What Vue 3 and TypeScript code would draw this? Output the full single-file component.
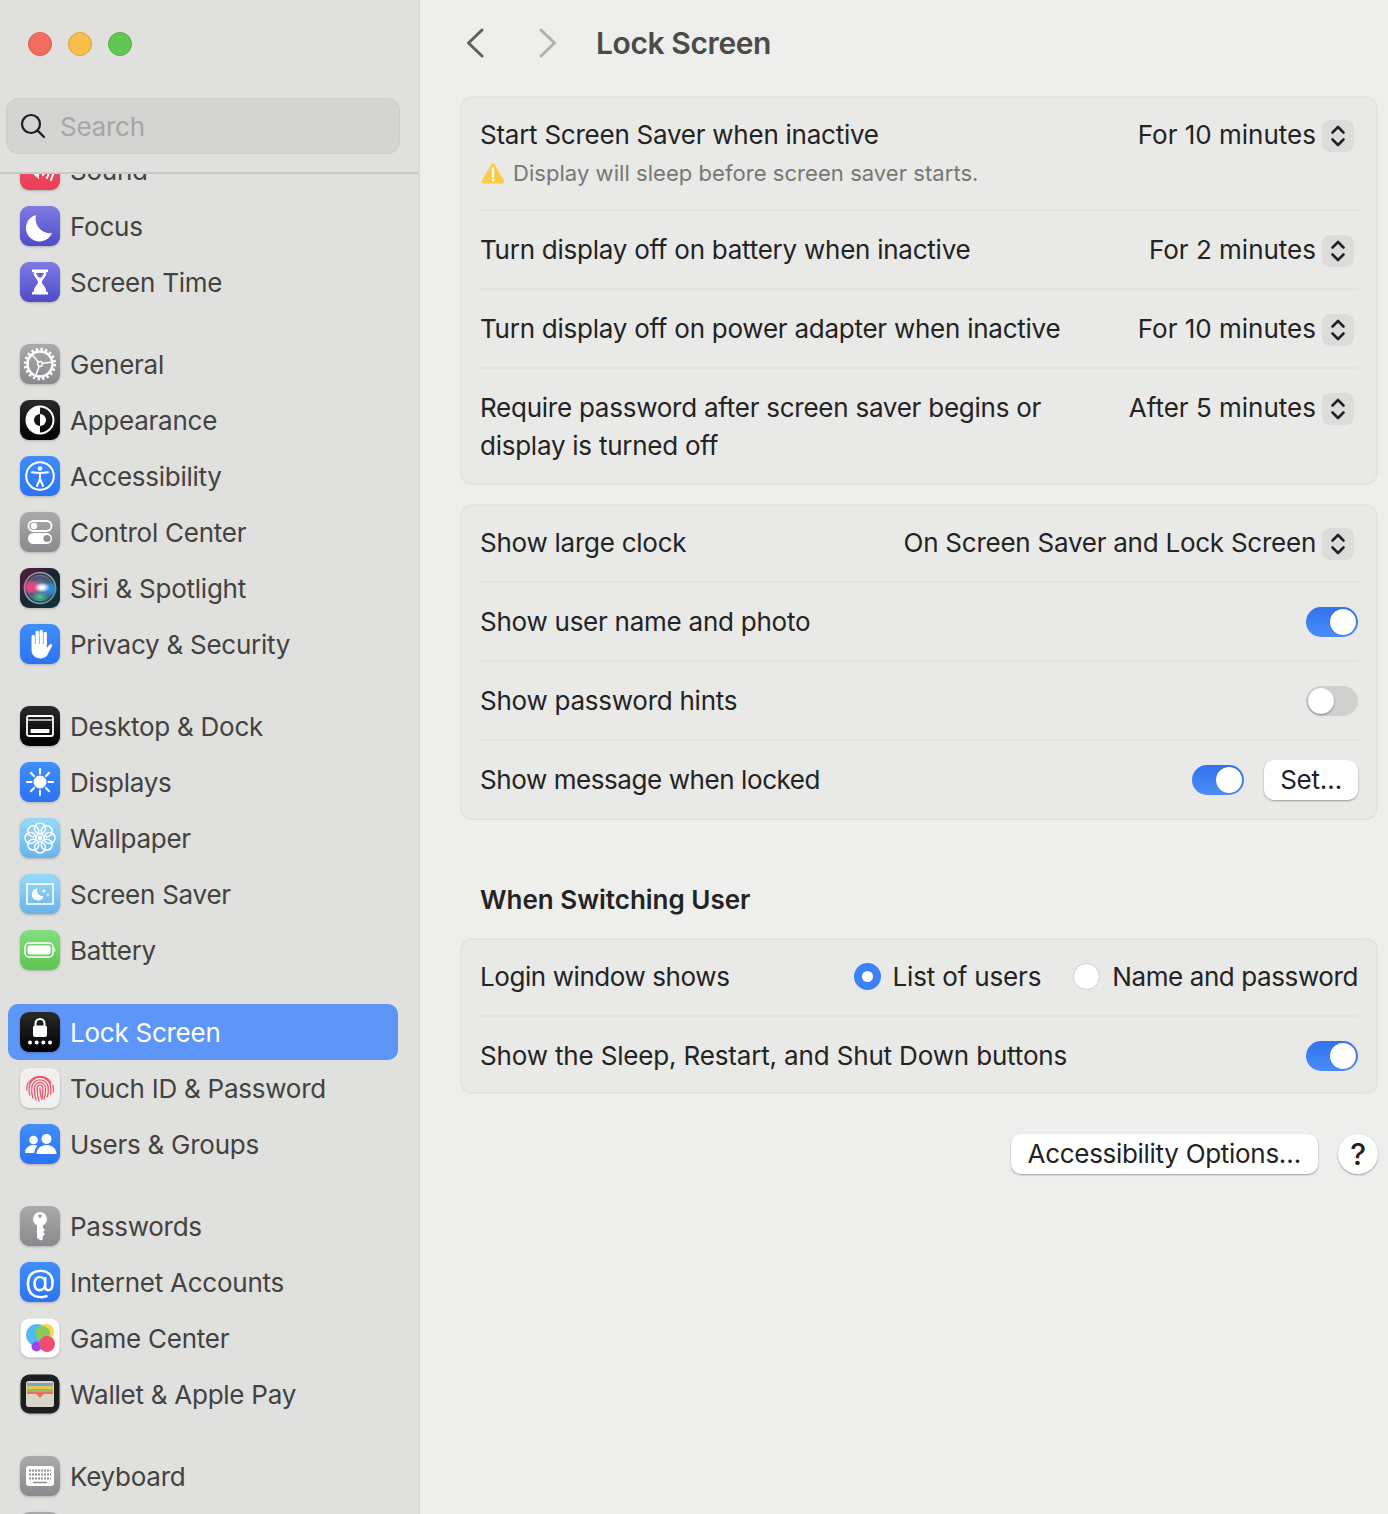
<script setup lang="ts">
interface Item { name: string; icon: string }
const groups: Item[][] = [
  [
    { name: 'Sound', icon: 'sound' },
    { name: 'Focus', icon: 'focus' },
    { name: 'Screen Time', icon: 'screentime' },
  ],
  [
    { name: 'General', icon: 'general' },
    { name: 'Appearance', icon: 'appearance' },
    { name: 'Accessibility', icon: 'accessibility' },
    { name: 'Control Center', icon: 'control' },
    { name: 'Siri & Spotlight', icon: 'siri' },
    { name: 'Privacy & Security', icon: 'privacy' },
  ],
  [
    { name: 'Desktop & Dock', icon: 'desktop' },
    { name: 'Displays', icon: 'displays' },
    { name: 'Wallpaper', icon: 'wallpaper' },
    { name: 'Screen Saver', icon: 'saver' },
    { name: 'Battery', icon: 'battery' },
  ],
  [
    { name: 'Lock Screen', icon: 'lock' },
    { name: 'Touch ID & Password', icon: 'touch' },
    { name: 'Users & Groups', icon: 'users' },
  ],
  [
    { name: 'Passwords', icon: 'passwords' },
    { name: 'Internet Accounts', icon: 'internet' },
    { name: 'Game Center', icon: 'game' },
    { name: 'Wallet & Apple Pay', icon: 'wallet' },
  ],
  [
    { name: 'Keyboard', icon: 'keyboard' },
    { name: 'Trackpad', icon: 'trackpad' },
  ],
]
const petals = [0, 45, 90, 135, 180, 225, 270, 315]
const rays = [0, 45, 90, 135, 180, 225, 270, 315]
const spokes = [-40, 80, 200]
</script>

<template>
  <div class="window">
    <svg class="defs" width="0" height="0" aria-hidden="true">
      <defs>
        <linearGradient id="gPurple" x1="0" y1="0" x2="0" y2="1"><stop offset="0" stop-color="#7f7ce4" /><stop offset="1" stop-color="#4e4cc5" /></linearGradient>
        <linearGradient id="gGray" x1="0" y1="0" x2="0" y2="1"><stop offset="0" stop-color="#aaaaad" /><stop offset="1" stop-color="#8a8a8e" /></linearGradient>
        <linearGradient id="gBlue" x1="0" y1="0" x2="0" y2="1"><stop offset="0" stop-color="#3f8ff9" /><stop offset="1" stop-color="#2c72f3" /></linearGradient>
        <linearGradient id="gSky" x1="0" y1="0" x2="0" y2="1"><stop offset="0" stop-color="#97dafa" /><stop offset="1" stop-color="#67b3ea" /></linearGradient>
        <linearGradient id="gGreen" x1="0" y1="0" x2="0" y2="1"><stop offset="0" stop-color="#84dc80" /><stop offset="1" stop-color="#5bc650" /></linearGradient>
        <linearGradient id="gRed" x1="0" y1="0" x2="0" y2="1"><stop offset="0" stop-color="#f5586c" /><stop offset="1" stop-color="#ec3c58" /></linearGradient>
        <linearGradient id="gBlack" x1="0" y1="0" x2="0" y2="1"><stop offset="0" stop-color="#2a2a2a" /><stop offset="1" stop-color="#000" /></linearGradient>
        <linearGradient id="gSiriBg" x1="0" y1="0" x2="1" y2="1"><stop offset="0" stop-color="#5a1d3e" /><stop offset=".5" stop-color="#17272f" /><stop offset="1" stop-color="#12343a" /></linearGradient>
        <linearGradient id="gSiriRing" x1="0" y1="0" x2="1" y2="1"><stop offset="0" stop-color="#c9708f" /><stop offset=".5" stop-color="#7fb0c0" /><stop offset="1" stop-color="#3f9d8c" /></linearGradient>
        <radialGradient id="gSiriOrb" cx="0.5" cy="0.5" r="0.55"><stop offset="0" stop-color="#7d8fb5" /><stop offset="1" stop-color="#27333f" /></radialGradient>
        <radialGradient id="gSiriPink" cx="0.5" cy="0.5" r="0.5"><stop offset="0" stop-color="#f5407f" /><stop offset=".6" stop-color="#f0467f" stop-opacity=".8" /><stop offset="1" stop-color="#f0467f" stop-opacity="0" /></radialGradient>
        <radialGradient id="gSiriCyan" cx="0.5" cy="0.5" r="0.5"><stop offset="0" stop-color="#2f8fe0" /><stop offset=".6" stop-color="#2f8fe0" stop-opacity=".8" /><stop offset="1" stop-color="#2f8fe0" stop-opacity="0" /></radialGradient>
        <radialGradient id="gSiriGreen" cx="0.5" cy="0.5" r="0.5"><stop offset="0" stop-color="#3fd09a" /><stop offset="1" stop-color="#3fd09a" stop-opacity="0" /></radialGradient>
        <radialGradient id="gSiriWhite" cx="0.5" cy="0.5" r="0.5"><stop offset=".25" stop-color="#fff" /><stop offset="1" stop-color="#fff" stop-opacity="0" /></radialGradient>
      </defs>
    </svg>

    <aside class="sidebar">
      <div class="side-head">
        <div class="lights">
          <span class="light red"></span>
          <span class="light yellow"></span>
          <span class="light green"></span>
        </div>
        <div class="search">
          <svg width="26" height="26" viewBox="0 0 26 26" fill="none" stroke="#1e1e1e" stroke-width="2.2" stroke-linecap="round">
            <circle cx="11" cy="11" r="9" />
            <path d="M17.6 17.6 24 24" />
          </svg>
          <span>Search</span>
        </div>
      </div>
      <div class="side-scroll">
        <div class="side-list">
          <div v-for="(group, gi) in groups" :key="gi" class="group">
            <div v-for="item in group" :key="item.name" class="item" :class="{ active: item.icon === 'lock' }">
              <svg class="app-icon" width="40" height="40" viewBox="0 0 40 40">
                <template v-if="item.icon === 'sound'">
                  <rect width="40" height="40" rx="9" fill="url(#gRed)" />
                  <path d="M7 17h5l7-6v18l-7-6H7z" fill="#fff" />
                  <path d="M23 15q3 5 0 10M27 12q4 8 0 16M31 10q5 10 0 20" stroke="#fff" stroke-width="2" fill="none" stroke-linecap="round" />
                </template>
                <template v-else-if="item.icon === 'focus'">
                  <rect width="40" height="40" rx="9" fill="url(#gPurple)" />
                  <path d="M16 9A13.500 13.500 0 1 0 32 27 14.500 14.500 0 0 1 16 9z" fill="#fff" />
                </template>
                <template v-else-if="item.icon === 'screentime'">
                  <rect width="40" height="40" rx="9" fill="url(#gPurple)" />
                  <path d="M12 7.500h16V10h-1.600c0 5-4 7-4.600 10 .6 3 4.600 5 4.600 10H28v2.500H12V30h1.600c0-5 4-7 4.600-10-.6-3-4.600-5-4.600-10H12z" fill="#fff" />
                  <path d="M16 11h8q-.5 3-4 5-3.500-2-4-5z" fill="#6664d4" />
                </template>
                <template v-else-if="item.icon === 'general'">
                  <rect width="40" height="40" rx="9" fill="url(#gGray)" />
                  <circle cx="20" cy="20" r="12.500" fill="none" stroke="#fff" stroke-width="2.600" />
                  <circle cx="20" cy="20" r="14.800" fill="none" stroke="#fff" stroke-width="2.800" stroke-dasharray="2.300 2.350" />
                  <circle cx="20" cy="20" r="2.400" fill="none" stroke="#fff" stroke-width="1.500" />
                  <path v-for="s in spokes" :key="s" d="M20 17.600V8" stroke="#fff" stroke-width="1.500" :transform="`rotate(${s} 20 20)`" />
                </template>
                <template v-else-if="item.icon === 'appearance'">
                  <rect width="40" height="40" rx="9" fill="url(#gBlack)" />
                  <circle cx="20" cy="20" r="13.500" fill="none" stroke="#fff" stroke-width="2" />
                  <path d="M20 7a13 13 0 0 0 0 26v-7a6 6 0 0 1 0-12z" fill="#fff" />
                  <path d="M20 14a6 6 0 0 1 0 12z" fill="#fff" />
                </template>
                <template v-else-if="item.icon === 'accessibility'">
                  <rect width="40" height="40" rx="9" fill="url(#gBlue)" />
                  <circle cx="20" cy="20" r="13.800" fill="none" stroke="#fff" stroke-width="2" />
                  <circle cx="20" cy="12.500" r="2.200" fill="#fff" />
                  <path d="M12 16.200q8 1.600 16 0M20 17.500v5.500M20 23l-3 7M20 23l3 7" stroke="#fff" stroke-width="2" fill="none" stroke-linecap="round" />
                </template>
                <template v-else-if="item.icon === 'control'">
                  <rect width="40" height="40" rx="9" fill="url(#gGray)" />
                  <rect x="8.500" y="9" width="23" height="10" rx="5" fill="none" stroke="#fff" stroke-width="1.800" />
                  <circle cx="14" cy="14" r="3.200" fill="#fff" />
                  <rect x="8" y="21" width="24" height="11" rx="5.500" fill="#fff" />
                  <circle cx="27" cy="26.500" r="3.600" fill="#8f8f92" />
                </template>
                <template v-else-if="item.icon === 'siri'">
                  <rect width="40" height="40" rx="9" fill="url(#gSiriBg)" />
                  <circle cx="20" cy="20" r="15.500" fill="url(#gSiriOrb)" stroke="url(#gSiriRing)" stroke-width="1.600" />
                  <circle cx="20" cy="20" r="12.500" fill="none" stroke="url(#gSiriRing)" stroke-width="1" opacity=".6" />
                  <ellipse cx="11.500" cy="19" rx="9" ry="7.500" fill="url(#gSiriPink)" />
                  <ellipse cx="29" cy="21" rx="9" ry="7.500" fill="url(#gSiriCyan)" />
                  <ellipse cx="20" cy="29" rx="9" ry="5" fill="url(#gSiriGreen)" />
                  <ellipse cx="22" cy="19.500" rx="8" ry="5" fill="url(#gSiriWhite)" />
                </template>
                <template v-else-if="item.icon === 'privacy'">
                  <rect width="40" height="40" rx="9" fill="url(#gBlue)" />
                  <path d="M11.500 12.500a1.700 1.700 0 0 1 3.400 0V20h.6V8.500a1.700 1.700 0 0 1 3.400 0V20h.6V7.500a1.700 1.700 0 0 1 3.400 0V20h.6V9.500a1.700 1.700 0 0 1 3.400 0V24l2.400-3.300c1.300-1.700 3.600-.2 2.700 1.600l-3.800 7C27.200 32.500 24.500 34.500 20.500 34.500c-5.500 0-9-3.500-9-9z" fill="#fff" />
                </template>
                <template v-else-if="item.icon === 'desktop'">
                  <rect width="40" height="40" rx="9" fill="url(#gBlack)" />
                  <rect x="7" y="10" width="26" height="20" rx="2" fill="none" stroke="#fff" stroke-width="1.800" />
                  <path d="M7 14h26" stroke="#fff" stroke-width="1.300" />
                  <rect x="10.500" y="23" width="19" height="4" rx="1" fill="#fff" />
                </template>
                <template v-else-if="item.icon === 'displays'">
                  <rect width="40" height="40" rx="9" fill="url(#gBlue)" />
                  <circle cx="20" cy="20" r="6.500" fill="#fff" />
                  <path v-for="r in rays" :key="r" d="M20 7v4.500" stroke="#fff" stroke-width="2" stroke-linecap="round" :transform="`rotate(${r} 20 20)`" />
                </template>
                <template v-else-if="item.icon === 'wallpaper'">
                  <rect width="40" height="40" rx="9" fill="url(#gSky)" />
                  <circle v-for="p in petals" :key="p" cx="20" cy="10.500" r="5.500" fill="none" stroke="#fff" stroke-width="1.500" :transform="`rotate(${p} 20 20)`" />
                  <circle cx="20" cy="20" r="2.500" fill="#fff" />
                </template>
                <template v-else-if="item.icon === 'saver'">
                  <rect width="40" height="40" rx="9" fill="url(#gSky)" />
                  <rect x="7" y="10" width="26" height="20" fill="none" stroke="#fff" stroke-width="1.600" />
                  <path d="M17 14.500a6 6 0 1 0 6.500 8 6.500 6.500 0 0 1-6.500-8z" fill="#fff" />
                  <path d="M24 14.500l.7 1.800 1.800.7-1.800.7-.7 1.800-.7-1.800-1.800-.7 1.800-.7zM28 19l.5 1.200 1.200.5-1.200.5-.5 1.200-.5-1.200-1.200-.5 1.200-.5z" fill="#fff" />
                </template>
                <template v-else-if="item.icon === 'battery'">
                  <rect width="40" height="40" rx="9" fill="url(#gGreen)" />
                  <rect x="5" y="13" width="28" height="14" rx="4" fill="none" stroke="#fff" stroke-width="1.500" />
                  <rect x="7.500" y="15.500" width="23" height="9" rx="2" fill="#fff" />
                  <path d="M34.500 17.500q2 2.500 0 5z" fill="#fff" />
                </template>
                <template v-else-if="item.icon === 'lock'">
                  <rect width="40" height="40" rx="9" fill="url(#gBlack)" />
                  <path d="M15.500 14v-2.500a4.500 4.500 0 0 1 9 0V14" fill="none" stroke="#fff" stroke-width="2" />
                  <rect x="13" y="13.500" width="14" height="11.500" rx="2" fill="#fff" />
                  <circle cx="10" cy="30.500" r="2" fill="#fff" />
                  <circle cx="16.700" cy="30.500" r="2" fill="#fff" />
                  <circle cx="23.300" cy="30.500" r="2" fill="#fff" />
                  <circle cx="30" cy="30.500" r="2" fill="#fff" />
                </template>
                <template v-else-if="item.icon === 'touch'">
                  <rect width="40" height="40" rx="9" fill="#f1f0ef" />
                  <g fill="none" stroke="#e9536d" stroke-width="1.300" stroke-linecap="round">
                    <path d="M9 15A12.500 12.500 0 0 1 31 15" />
                    <path d="M6.800 22A13.500 13.500 0 0 1 8 15M33.200 24a15 15 0 0 0-.4-7" />
                    <path d="M9.800 27q-1-3-.6-7a10.800 10.800 0 0 1 21.600 0q.3 3-.2 6" />
                    <path d="M12.800 30q-1.500-5-1-10a8.200 8.200 0 0 1 16.400 0q.5 5-1 9" />
                    <path d="M16 32q-1.800-6-1.500-12a5.500 5.500 0 0 1 11 0q.3 6-1.500 11" />
                    <path d="M19 33q-1.900-6-1.800-13a2.800 2.800 0 0 1 5.600 0q.2 6-1 11" />
                    <path d="M20 20q0 7 1.800 11" />
                  </g>
                </template>
                <template v-else-if="item.icon === 'users'">
                  <rect width="40" height="40" rx="9" fill="url(#gBlue)" />
                  <circle cx="13.500" cy="16" r="4.300" fill="#fff" />
                  <circle cx="26.500" cy="15" r="5" fill="#fff" />
                  <path d="M5 29c0-5 4-8 8.500-8 1.500 0 3 .4 4 1-2 1.700-3 4-3.200 7z" fill="#fff" />
                  <path d="M16.500 30c0-5.500 4.500-9 10-9s10 3.500 10 9z" fill="#fff" />
                </template>
                <template v-else-if="item.icon === 'passwords'">
                  <rect width="40" height="40" rx="9" fill="url(#gGray)" />
                  <circle cx="20" cy="13" r="7" fill="#fff" />
                  <path d="M17 18h6v4l2 2-2 2 2 2-2 2v3l-2 1.500L17 32z" fill="#fff" />
                  <circle cx="20" cy="10" r="1.800" fill="#9b9b9e" />
                </template>
                <template v-else-if="item.icon === 'internet'">
                  <rect width="40" height="40" rx="9" fill="url(#gBlue)" />
                  <text x="20" y="29.500" text-anchor="middle" class="at">@</text>
                </template>
                <template v-else-if="item.icon === 'game'">
                  <rect x=".5" y=".5" width="39" height="39" rx="9" fill="#fff" />
                  <circle cx="17" cy="17" r="11" fill="#54b8f5" />
                  <circle cx="26" cy="14" r="8" fill="#f4d94c" />
                  <circle cx="22.500" cy="15.500" r="7.500" fill="#8bc958" />
                  <circle cx="16.500" cy="28.500" r="5" fill="#a145e6" />
                  <circle cx="27" cy="26" r="8" fill="#ef4e70" />
                </template>
                <template v-else-if="item.icon === 'wallet'">
                  <rect x=".5" y=".5" width="39" height="39" rx="9" fill="#1d1d1d" />
                  <rect x="6" y="7" width="28" height="26" rx="2.500" fill="#dad5ca" />
                  <rect x="7" y="9" width="26" height="3" fill="#6fa5d8" />
                  <rect x="7" y="12" width="26" height="3" fill="#efc14f" />
                  <rect x="7" y="15" width="26" height="3" fill="#8cc163" />
                  <path d="M7 18h26v2h-9l-4 4-4-4H7z" fill="#e5705d" />
                </template>
                <template v-else-if="item.icon === 'keyboard'">
                  <rect width="40" height="40" rx="9" fill="url(#gGray)" />
                  <rect x="6" y="10" width="28" height="20" rx="3" fill="#fff" />
                  <path d="M9 14.500h22M9 18.500h22M9 22.500h22" stroke="#8f8f92" stroke-width="2" stroke-dasharray="2 1" />
                  <path d="M13 26.500h14" stroke="#8f8f92" stroke-width="1.600" />
                </template>
                <template v-else>
                  <rect width="40" height="40" rx="9" fill="url(#gGray)" />
                </template>
              </svg>
              <span>{{ item.name }}</span>
            </div>
          </div>
        </div>
      </div>
    </aside>

    <main class="content">
      <header class="topbar">
        <svg class="back" width="18" height="30" viewBox="0 0 18 30" fill="none" stroke="#5f5f5d" stroke-width="3" stroke-linecap="round" stroke-linejoin="round"><path d="M16 2 2.500 15 16 28" /></svg>
        <svg class="fwd" width="18" height="30" viewBox="0 0 18 30" fill="none" stroke="#b0b0ae" stroke-width="3" stroke-linecap="round" stroke-linejoin="round"><path d="M2 2l13.500 13L2 28" /></svg>
        <h1>Lock Screen</h1>
      </header>

      <section class="card">
        <div class="row first tall">
          <div>
            <div class="label">Start Screen Saver when inactive</div>
            <div class="sub">
              <svg width="24" height="22" viewBox="0 0 24 22"><path d="M12 1.500c.8 0 1.400.4 1.800 1.100l9.200 16c.7 1.300-.1 2.900-1.700 2.900H2.700C1.100 21.500.3 19.900 1 18.600l9.200-16c.4-.7 1-1.100 1.800-1.100z" fill="#fdca45" /><path d="M12 6.500v8" stroke="#fff" stroke-width="2.400" stroke-linecap="round" /><circle cx="12" cy="18" r="1.500" fill="#fff" /></svg>
              <span>Display will sleep before screen saver starts.</span>
            </div>
          </div>
          <div class="select">
            <span>For 10 minutes</span>
            <span class="stepper"><svg width="16" height="24" viewBox="0 0 16 24" fill="none" stroke="#222" stroke-width="2.600" stroke-linecap="round" stroke-linejoin="round"><path d="M2.500 8.500 8 3l5.500 5.500M2.500 15.500 8 21l5.500-5.500" /></svg></span>
          </div>
        </div>
        <div class="row">
          <div class="label">Turn display off on battery when inactive</div>
          <div class="select">
            <span>For 2 minutes</span>
            <span class="stepper"><svg width="16" height="24" viewBox="0 0 16 24" fill="none" stroke="#222" stroke-width="2.600" stroke-linecap="round" stroke-linejoin="round"><path d="M2.500 8.500 8 3l5.500 5.500M2.500 15.500 8 21l5.500-5.500" /></svg></span>
          </div>
        </div>
        <div class="row">
          <div class="label">Turn display off on power adapter when inactive</div>
          <div class="select">
            <span>For 10 minutes</span>
            <span class="stepper"><svg width="16" height="24" viewBox="0 0 16 24" fill="none" stroke="#222" stroke-width="2.600" stroke-linecap="round" stroke-linejoin="round"><path d="M2.500 8.500 8 3l5.500 5.500M2.500 15.500 8 21l5.500-5.500" /></svg></span>
          </div>
        </div>
        <div class="row tall wrap">
          <div class="label narrow">Require password after screen saver begins or display is turned off</div>
          <div class="select">
            <span>After 5 minutes</span>
            <span class="stepper"><svg width="16" height="24" viewBox="0 0 16 24" fill="none" stroke="#222" stroke-width="2.600" stroke-linecap="round" stroke-linejoin="round"><path d="M2.500 8.500 8 3l5.500 5.500M2.500 15.500 8 21l5.500-5.500" /></svg></span>
          </div>
        </div>
      </section>

      <section class="card second">
        <div class="row first lift">
          <div class="label">Show large clock</div>
          <div class="select long">
            <span>On Screen Saver and Lock Screen</span>
            <span class="stepper"><svg width="16" height="24" viewBox="0 0 16 24" fill="none" stroke="#222" stroke-width="2.600" stroke-linecap="round" stroke-linejoin="round"><path d="M2.500 8.500 8 3l5.500 5.500M2.500 15.500 8 21l5.500-5.500" /></svg></span>
          </div>
        </div>
        <div class="row">
          <div class="label">Show user name and photo</div>
          <span class="toggle on"><i></i></span>
        </div>
        <div class="row">
          <div class="label">Show password hints</div>
          <span class="toggle"><i></i></span>
        </div>
        <div class="row">
          <div class="label tight">Show message when locked</div>
          <div class="controls">
            <span class="toggle on"><i></i></span>
            <button class="btn set">Set…</button>
          </div>
        </div>
      </section>

      <h2>When Switching User</h2>

      <section class="card">
        <div class="row first lift">
          <div class="label tight">Login window shows</div>
          <div class="radios">
            <span class="radio-wrap"><span class="radio on"></span><span class="label loose">List of users</span></span>
            <span class="radio-wrap"><span class="radio"></span><span class="label">Name and password</span></span>
          </div>
        </div>
        <div class="row last">
          <div class="label loose">Show the Sleep, Restart, and Shut Down buttons</div>
          <span class="toggle on"><i></i></span>
        </div>
      </section>

      <footer class="actions">
        <button class="btn">Accessibility Options…</button>
        <button class="btn help">?</button>
      </footer>
    </main>
  </div>
</template>

<style>
html, body { margin: 0; background: #eeeeec; }
</style>

<style scoped>
.window {
  width: 1388px;
  height: 1514px;
  overflow: hidden;
  display: flex;
  font-family: Inter, "Liberation Sans", sans-serif;
  font-size: 26px;
  letter-spacing: -0.25px;
  background: #eeeeec;
  color: #232323;
}
.defs { position: absolute; }
.sidebar {
  width: 418px;
  flex: none;
  display: flex;
  flex-direction: column;
  background: #e0e0de;
  border-right: 2px solid #dadad8;
}
.side-head {
  height: 174px;
  flex: none;
  box-sizing: border-box;
  padding: 0 18px 0 6px;
  border-bottom: 2px solid #c9c9c7;
}
.lights { height: 98px; padding-left: 22px; display: flex; align-items: flex-start; gap: 16px; padding-top: 32px; box-sizing: border-box; }
.light { width: 24px; height: 24px; border-radius: 50%; box-sizing: border-box; border: 1px solid; }
.red { background: #f26d60; border-color: #dc5a4e; }
.yellow { background: #f8be4c; border-color: #dea53b; }
.green { background: #61c655; border-color: #50ae46; }
.search {
  height: 56px;
  box-sizing: border-box;
  border: 1px solid #cdcdcb;
  border-radius: 12px;
  background: #d4d4d2;
  display: flex;
  align-items: center;
  gap: 14px;
  padding-left: 13px;
  color: #a6a6a4;
}
.side-scroll { flex: 1; overflow: hidden; }
.side-list { margin-top: -32px; }
.group { margin-bottom: 26px; }
.item {
  height: 56px;
  margin: 0 20px 0 8px;
  padding-left: 12px;
  display: flex;
  align-items: center;
  gap: 10px;
  border-radius: 10px;
  color: #424240;
}
.item.active { background: #5e96f7; color: #fff; }
.app-icon { flex: none; filter: drop-shadow(0 1px 1px rgba(0, 0, 0, .22)); }
.at { font-family: Inter, sans-serif; font-size: 32px; fill: #fff; }
.content { flex: 1; padding: 0 10px 0 40px; min-width: 0; }
.topbar { height: 86px; margin-bottom: 10px; display: flex; align-items: center; }
.back { margin-left: 6px; }
.fwd { margin-left: 55px; }
h1 { margin: 0 0 0 39px; font-size: 30px; font-weight: 600; color: #4a4a48; line-height: 38px; letter-spacing: -0.4px; }
.card {
  border: 2px solid #e3e3e1;
  border-radius: 12px;
  background: #e9e9e7;
}
.card.second { margin-top: 19px; }
.row {
  min-height: 77px;
  margin: 0 18px;
  border-top: 2px solid #e2e2e0;
  display: flex;
  justify-content: space-between;
  align-items: center;
  line-height: 38px;
}
.row.first { border-top: 0; min-height: 75px; }
.row.tall { align-items: flex-start; padding: 20px 0 17px; }
.row.first.tall { padding: 18px 0 17px; }
.row.lift { box-sizing: border-box; padding-bottom: 2px; }
.row.last { box-sizing: border-box; min-height: 77px; padding-top: 2px; }
.label.narrow { width: 590px; }
.label.tight { letter-spacing: -0.42px; }
.label.loose { letter-spacing: -0.16px; }
.sub { display: flex; align-items: center; gap: 8px; color: #777775; font-size: 22px; letter-spacing: 0.05px; margin-left: 1px; }
.select { display: flex; align-items: center; gap: 6px; padding-right: 4px; letter-spacing: 0; }
.select.long { letter-spacing: -0.25px; }
.stepper { width: 32px; height: 32px; margin-top: 2px; border-radius: 8px; background: #dcdcda; display: flex; align-items: center; justify-content: center; }
.toggle { width: 52px; height: 30px; border-radius: 15px; background: #d0d0ce; position: relative; display: block; }
.toggle i { position: absolute; width: 26px; height: 26px; top: 2px; left: 2px; border-radius: 50%; background: #fff; box-shadow: 0 1px 2px rgba(0, 0, 0, .4); }
.toggle.on { background: linear-gradient(#3272ec, #4a8df7); }
.toggle.on i { left: 24px; box-shadow: 0 0 1px rgba(0, 0, 0, .3); }
.controls { display: flex; align-items: center; gap: 20px; }
.btn {
  height: 40px;
  box-sizing: border-box;
  border: 0;
  border-radius: 10px;
  background: #fff;
  box-shadow: 0 1px 2px rgba(0, 0, 0, .35);
  font: inherit;
  letter-spacing: -0.3px;
  color: #232323;
  padding: 0 17px;
  line-height: 40px;
}
.btn.set { width: 94px; padding: 0; }
h2 { margin: 61px 0 19px 20px; font-size: 26px; font-weight: 600; line-height: 38px; color: #232323; letter-spacing: 0; }
.radios { display: flex; gap: 32px; letter-spacing: -0.4px; }
.radio-wrap { display: flex; align-items: center; gap: 12px; }
.radio { width: 27px; height: 27px; box-sizing: border-box; border-radius: 50%; background: #fff; border: 1px solid #cfcfcd; display: block; }
.radio.on { background: #fff; border: 8px solid #3c82f6; }
.actions { margin-top: 40px; display: flex; justify-content: flex-end; gap: 20px; }
.btn.help { width: 40px; padding: 0; border-radius: 50%; font-weight: 500; font-size: 30px; }
</style>
